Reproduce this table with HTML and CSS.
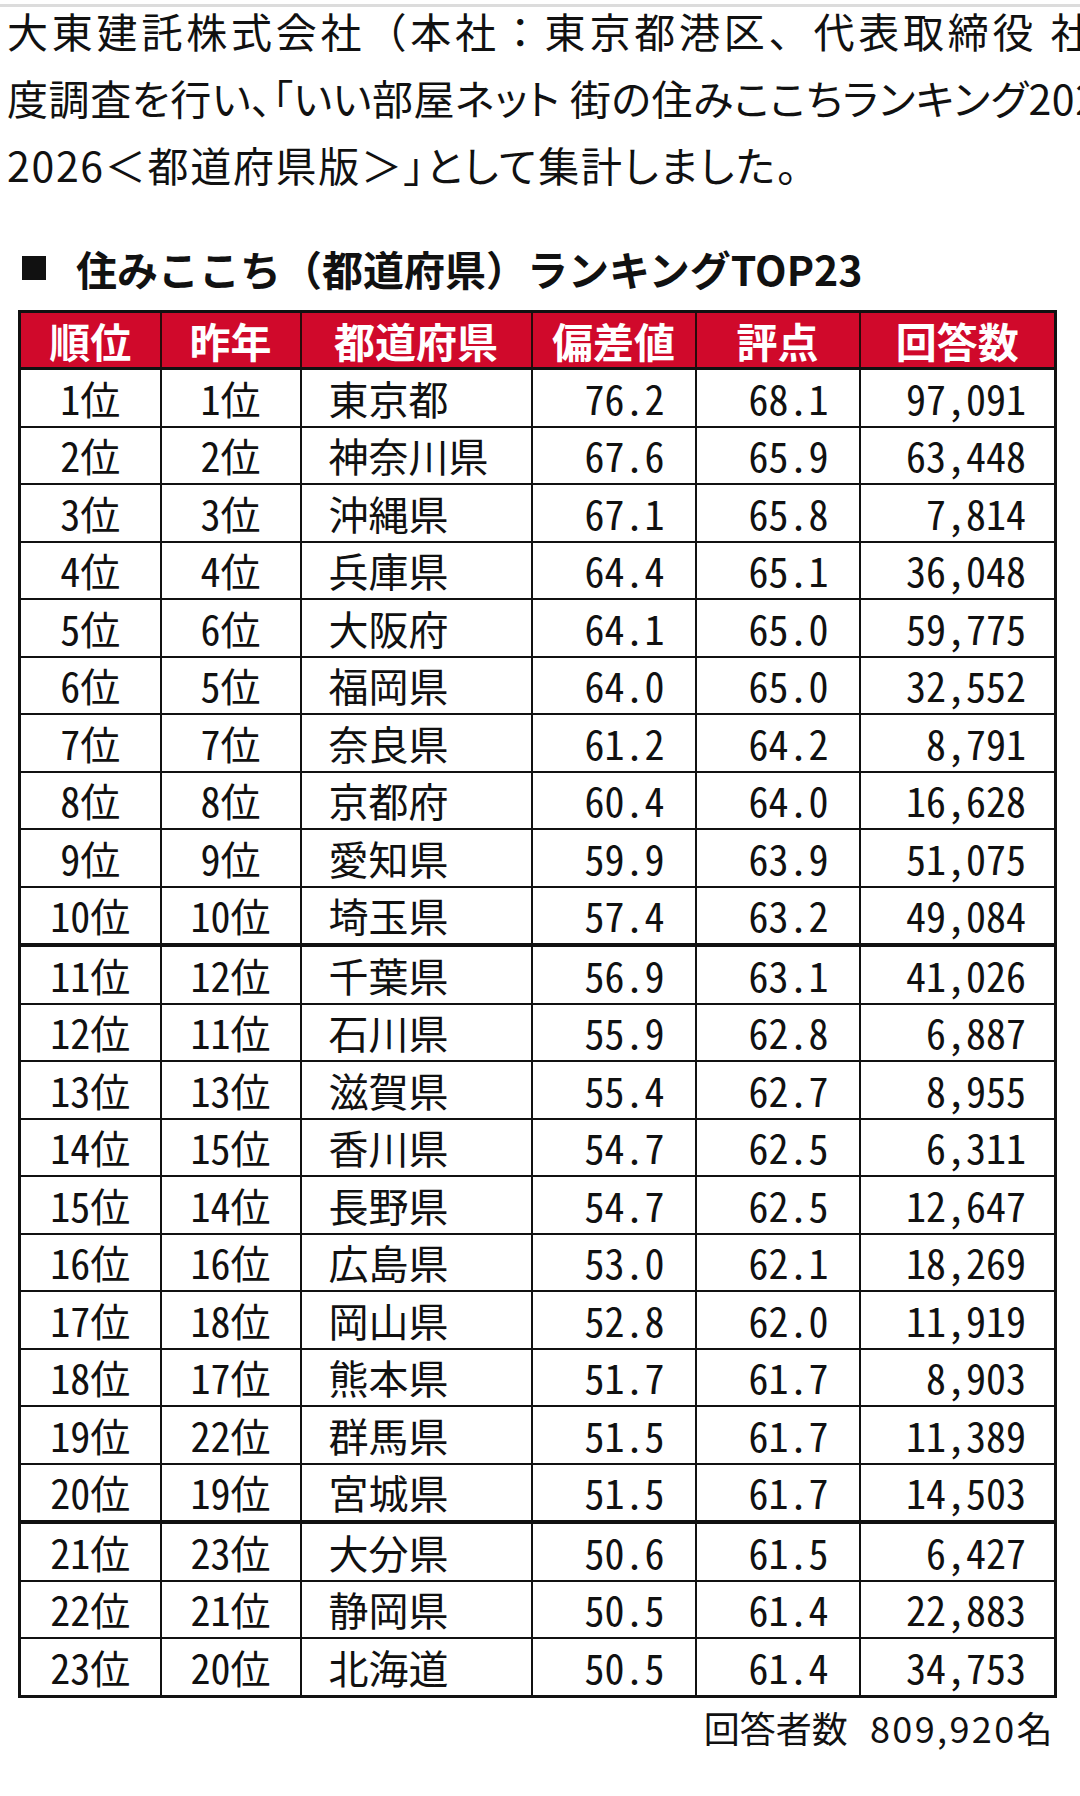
FILE: index.html
```html
<!DOCTYPE html>
<html lang="ja">
<head>
<meta charset="utf-8">
<title>住みここちランキング</title>
<link rel="stylesheet" href="styles.css">
</head>
<body>
<div class="topline"></div>
<div class="intro">
  <p class="intro-line wide">大東建託株式会社（本社：東京都港区、代表取締役 社長執行役員）は、</p>
  <p class="intro-line tight">度調査を行い、「いい部屋ネット 街の住みここちランキング2026</p>
  <p class="intro-line mid">2026＜都道府県版＞」として集計しました。</p>
</div>
<h2 class="title"><span class="square"></span>住みここち（都道府県）ランキングTOP23</h2>
<table class="rank">
  <colgroup>
    <col class="c1"><col class="c2"><col class="c3"><col class="c4"><col class="c5"><col class="c6">
  </colgroup>
  <thead>
    <tr><th>順位</th><th>昨年</th><th>都道府県</th><th>偏差値</th><th>評点</th><th>回答数</th></tr>
  </thead>
  <tbody>
    <tr><td class="ctr">1位</td><td class="ctr">1位</td><td class="pref">東京都</td><td class="num">76.2</td><td class="num">68.1</td><td class="cnt">97,091</td></tr>
    <tr><td class="ctr">2位</td><td class="ctr">2位</td><td class="pref">神奈川県</td><td class="num">67.6</td><td class="num">65.9</td><td class="cnt">63,448</td></tr>
    <tr><td class="ctr">3位</td><td class="ctr">3位</td><td class="pref">沖縄県</td><td class="num">67.1</td><td class="num">65.8</td><td class="cnt">7,814</td></tr>
    <tr><td class="ctr">4位</td><td class="ctr">4位</td><td class="pref">兵庫県</td><td class="num">64.4</td><td class="num">65.1</td><td class="cnt">36,048</td></tr>
    <tr><td class="ctr">5位</td><td class="ctr">6位</td><td class="pref">大阪府</td><td class="num">64.1</td><td class="num">65.0</td><td class="cnt">59,775</td></tr>
    <tr><td class="ctr">6位</td><td class="ctr">5位</td><td class="pref">福岡県</td><td class="num">64.0</td><td class="num">65.0</td><td class="cnt">32,552</td></tr>
    <tr><td class="ctr">7位</td><td class="ctr">7位</td><td class="pref">奈良県</td><td class="num">61.2</td><td class="num">64.2</td><td class="cnt">8,791</td></tr>
    <tr><td class="ctr">8位</td><td class="ctr">8位</td><td class="pref">京都府</td><td class="num">60.4</td><td class="num">64.0</td><td class="cnt">16,628</td></tr>
    <tr><td class="ctr">9位</td><td class="ctr">9位</td><td class="pref">愛知県</td><td class="num">59.9</td><td class="num">63.9</td><td class="cnt">51,075</td></tr>
    <tr class="sep"><td class="ctr">10位</td><td class="ctr">10位</td><td class="pref">埼玉県</td><td class="num">57.4</td><td class="num">63.2</td><td class="cnt">49,084</td></tr>
    <tr><td class="ctr">11位</td><td class="ctr">12位</td><td class="pref">千葉県</td><td class="num">56.9</td><td class="num">63.1</td><td class="cnt">41,026</td></tr>
    <tr><td class="ctr">12位</td><td class="ctr">11位</td><td class="pref">石川県</td><td class="num">55.9</td><td class="num">62.8</td><td class="cnt">6,887</td></tr>
    <tr><td class="ctr">13位</td><td class="ctr">13位</td><td class="pref">滋賀県</td><td class="num">55.4</td><td class="num">62.7</td><td class="cnt">8,955</td></tr>
    <tr><td class="ctr">14位</td><td class="ctr">15位</td><td class="pref">香川県</td><td class="num">54.7</td><td class="num">62.5</td><td class="cnt">6,311</td></tr>
    <tr><td class="ctr">15位</td><td class="ctr">14位</td><td class="pref">長野県</td><td class="num">54.7</td><td class="num">62.5</td><td class="cnt">12,647</td></tr>
    <tr><td class="ctr">16位</td><td class="ctr">16位</td><td class="pref">広島県</td><td class="num">53.0</td><td class="num">62.1</td><td class="cnt">18,269</td></tr>
    <tr><td class="ctr">17位</td><td class="ctr">18位</td><td class="pref">岡山県</td><td class="num">52.8</td><td class="num">62.0</td><td class="cnt">11,919</td></tr>
    <tr><td class="ctr">18位</td><td class="ctr">17位</td><td class="pref">熊本県</td><td class="num">51.7</td><td class="num">61.7</td><td class="cnt">8,903</td></tr>
    <tr><td class="ctr">19位</td><td class="ctr">22位</td><td class="pref">群馬県</td><td class="num">51.5</td><td class="num">61.7</td><td class="cnt">11,389</td></tr>
    <tr class="sep"><td class="ctr">20位</td><td class="ctr">19位</td><td class="pref">宮城県</td><td class="num">51.5</td><td class="num">61.7</td><td class="cnt">14,503</td></tr>
    <tr><td class="ctr">21位</td><td class="ctr">23位</td><td class="pref">大分県</td><td class="num">50.6</td><td class="num">61.5</td><td class="cnt">6,427</td></tr>
    <tr><td class="ctr">22位</td><td class="ctr">21位</td><td class="pref">静岡県</td><td class="num">50.5</td><td class="num">61.4</td><td class="cnt">22,883</td></tr>
    <tr><td class="ctr">23位</td><td class="ctr">20位</td><td class="pref">北海道</td><td class="num">50.5</td><td class="num">61.4</td><td class="cnt">34,753</td></tr>
  </tbody>
</table>
<p class="footer">回答者数 <span class="total">809,920名</span></p>
</body>
</html>
```

FILE: styles.css
```css
html, body {
  margin: 0;
  padding: 0;
  background: #ffffff;
}

body {
  width: 1080px;
  overflow: hidden;
  color: #111111;
  font-family: "Noto Sans CJK JP", "Noto Sans", sans-serif;
}

.topline {
  margin-top: 4px;
  height: 3px;
  background: #dcdcdc;
}

.intro {
  margin-top: -10px;
  padding-left: 7px;
  overflow: hidden;
}

.intro-line {
  margin: 0;
  font-size: 41px;
  line-height: 67px;
  white-space: nowrap;
  color: #111111;
}

.intro-line.wide {
  letter-spacing: 3.8px;
}

.intro-line.tight {
  font-feature-settings: "palt" 1;
  letter-spacing: 0.6px;
}

.intro-line.mid {
  font-feature-settings: "palt" 1;
  letter-spacing: 1.7px;
}

.title {
  margin: 40px 0 0 22px;
  font-size: 41px;
  font-weight: 700;
  line-height: 60px;
  display: flex;
  align-items: center;
  color: #111111;
}

.square {
  display: inline-block;
  width: 24px;
  height: 24px;
  background: #111111;
  margin-right: 30px;
}

.rank {
  margin: 12px 0 0 18px;
  width: 1036px;
  border-collapse: collapse;
  table-layout: fixed;
  font-family: "Noto Sans Mono CJK JP", "Noto Sans CJK JP", monospace;
  border: 3px solid #111111;
}

.c1 { width: 141px; }
.c2 { width: 140px; }
.c3 { width: 231px; }
.c4 { width: 164px; }
.c5 { width: 164px; }
.c6 { width: 196px; }

.rank th {
  height: 54px;
  padding: 0;
  background: #d0092b;
  color: #ffffff;
  font-family: "Noto Sans CJK JP", sans-serif;
  font-weight: 700;
  font-size: 41px;
  line-height: 54px;
  text-align: center;
  border: 2px solid #2a0a0a;
  border-bottom: 3px solid #111111;
}

.rank td {
  height: 55.5px;
  padding: 0;
  font-size: 40px;
  line-height: 50px;
  border: 2px solid #111111;
  white-space: nowrap;
}

.rank tr.sep td {
  border-bottom: 4px solid #111111;
}

.ctr {
  text-align: center;
}

.pref {
  text-align: left;
  padding-left: 27px !important;
}

.num {
  text-align: right;
  padding-right: 30px !important;
}

.cnt {
  text-align: right;
  padding-right: 28px !important;
}

.footer {
  margin: 4px 0 0 0;
  width: 1055px;
  text-align: right;
  font-size: 36px;
  line-height: 50px;
  color: #111111;
}

.total {
  margin-left: 14px;
  letter-spacing: 2.4px;
}
```
